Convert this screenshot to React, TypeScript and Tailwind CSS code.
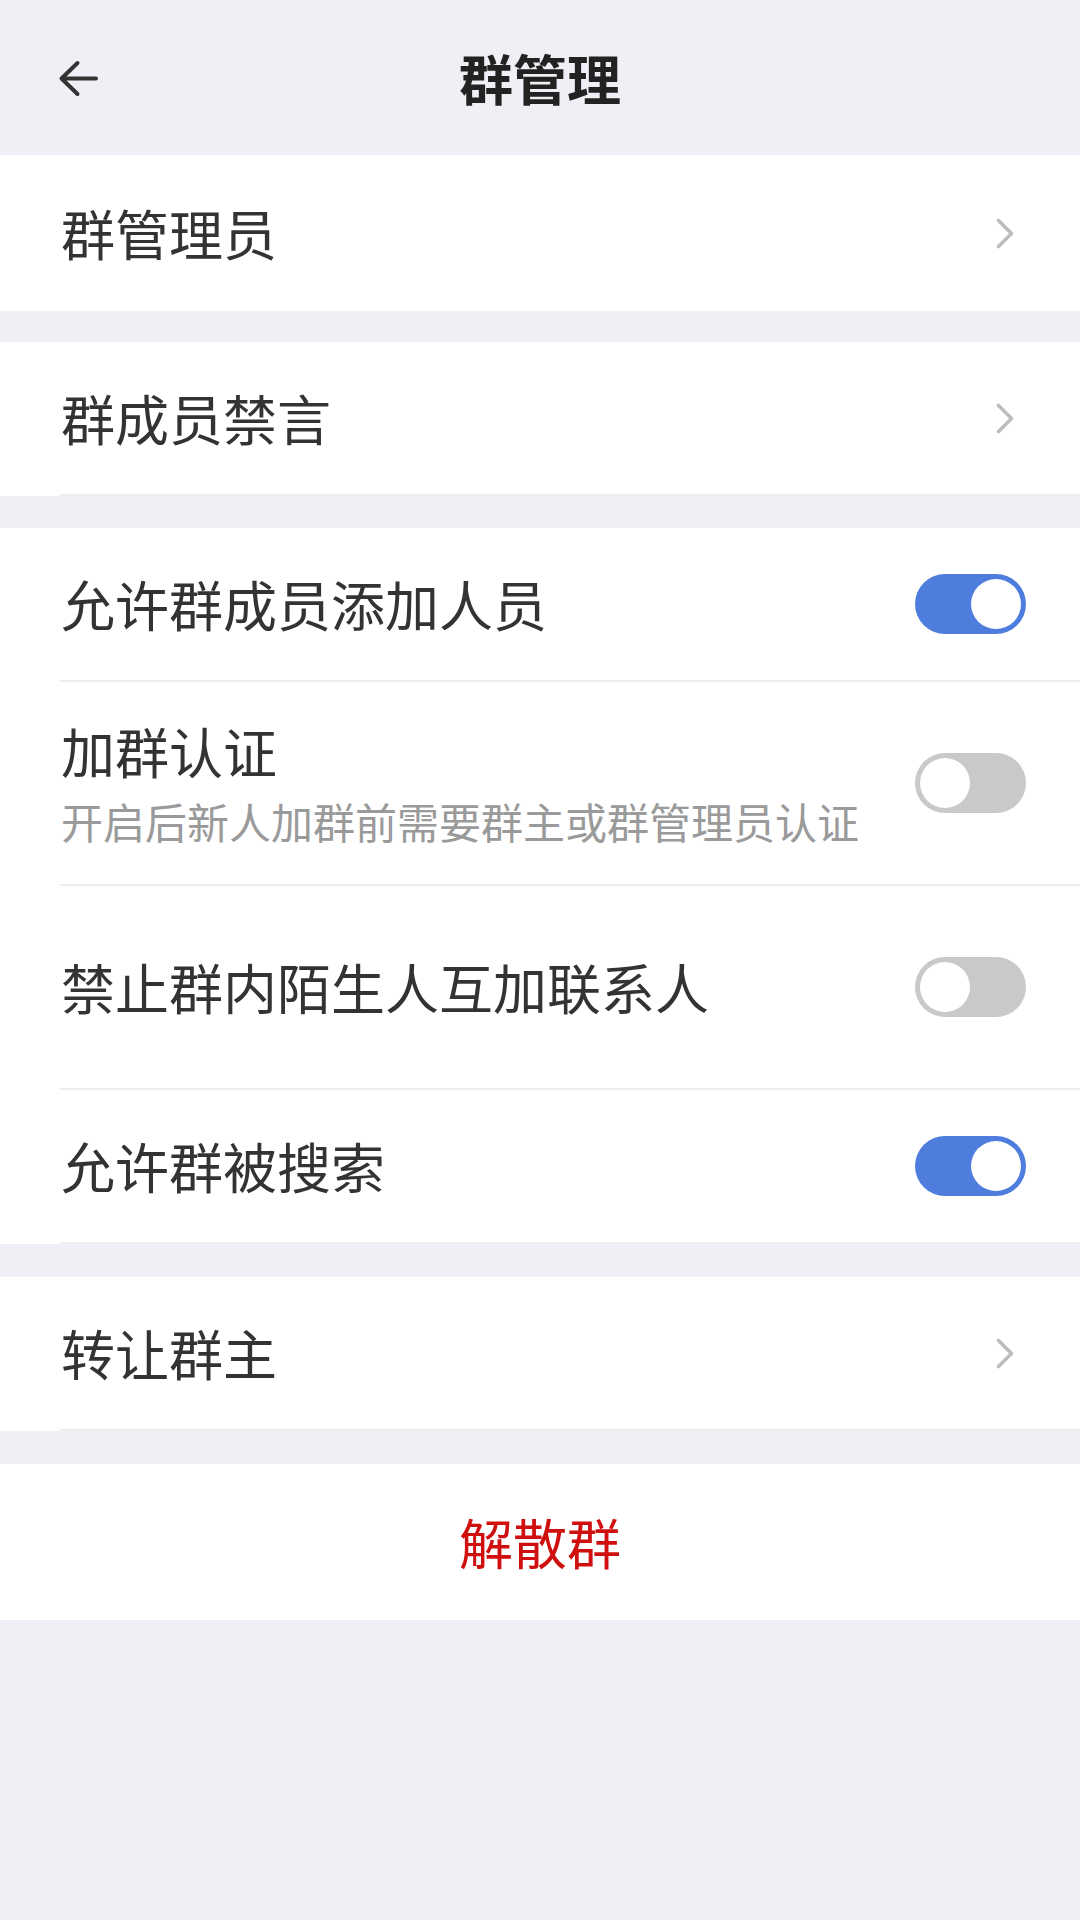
import React from 'react';

const font = { fontFamily: '"Noto Sans CJK SC", "Noto Sans", sans-serif' };

const Toggle = ({ on }: { on: boolean }) => (
  <div
    className={`w-[111px] h-[60px] rounded-full p-[5px] flex shrink-0 ${
      on ? 'bg-[#4f7ddd] justify-end' : 'bg-[#c9c9c9] justify-start'
    }`}
  >
    <div className="w-[50px] h-[50px] rounded-full bg-white" />
  </div>
);

const Chevron = () => (
  <svg width="18" height="31" viewBox="0 0 18 31" fill="none" className="shrink-0">
    <polyline points="2.5,2.5 15.5,15.5 2.5,28.5" stroke="#bdbdbd" strokeWidth="3.6" strokeLinecap="round" strokeLinejoin="round" />
  </svg>
);

const Divider = () => <div className="ml-[60px] h-[2px] bg-[#ededed]" />;

const LinkRow = ({ label, divider = true }: { label: string; divider?: boolean }) => (
  <div className="bg-white">
    <div className={`${divider ? 'h-[152px]' : 'h-[156px]'} flex items-center justify-between pl-[61px] pr-[66px]`}>
      <span className="text-[54px] leading-none text-[#333333]">{label}</span>
      <Chevron />
    </div>
    {divider && <Divider />}
  </div>
);

const ToggleRow = ({ label, on, sub, tall }: { label: string; on: boolean; sub?: string; tall?: boolean }) => (
  <div className="bg-white">
    <div className={`${tall ? 'h-[202px]' : 'h-[152px]'} flex items-center justify-between pl-[61px] pr-[54px]`}>
      {sub ? (
        <div className="self-start pt-[42px] flex flex-col">
          <span className="text-[54px] leading-none text-[#333333]">{label}</span>
          <span className="text-[42px] leading-none text-[#9a9a9a] mt-[22px]">{sub}</span>
        </div>
      ) : (
        <span className="text-[54px] leading-none text-[#333333]">{label}</span>
      )}
      <Toggle on={on} />
    </div>
    <Divider />
  </div>
);

export default function App() {
  return (
    <div className="w-[1080px] h-[1920px] bg-[#eef0f5]" style={font}>
      {/* header */}
      <div className="h-[155px] relative flex items-center justify-center">
        <div className="absolute left-[58px] top-[60px]">
          <svg width="40" height="37" viewBox="0 0 40 37" fill="none">
            <path d="M38 18.5H4M19.5 3L3.5 18.5L19.5 34" stroke="#333333" strokeWidth="4" strokeLinecap="round" strokeLinejoin="round" />
          </svg>
        </div>
        <h1 className="text-[54px] leading-none font-bold text-[#222222]">群管理</h1>
      </div>

      <LinkRow label="群管理员" divider={false} />
      <div className="h-[31px]" />
      <LinkRow label="群成员禁言" />
      <div className="h-[32px]" />
      <ToggleRow label="允许群成员添加人员" on />
      <ToggleRow label="加群认证" sub="开启后新人加群前需要群主或群管理员认证" on={false} tall />
      <ToggleRow label="禁止群内陌生人互加联系人" on={false} tall />
      <ToggleRow label="允许群被搜索" on />
      <div className="h-[33px]" />
      <LinkRow label="转让群主" />
      <div className="h-[33px]" />
      <div className="bg-white h-[156px] flex items-center justify-center">
        <span className="text-[54px] leading-none text-[#d00f0f]">解散群</span>
      </div>
    </div>
  );
}
